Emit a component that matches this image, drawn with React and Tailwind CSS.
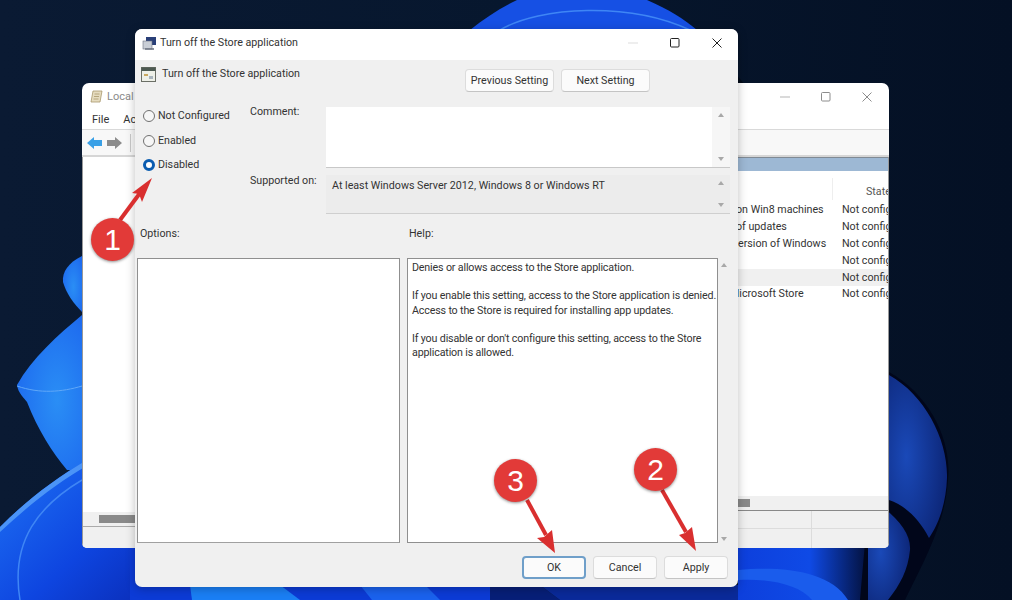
import React from 'react';

// Windows 11 bloom wallpaper, only the bits that show around the windows
function Wallpaper() {
  return (
    <svg className="absolute inset-0 w-full h-full" viewBox="0 0 1012 600">
      <defs>
        <linearGradient id="bg" x1="0" y1="0" x2="1" y2="0">
          <stop offset="0" stopColor="#0a1a33" />
          <stop offset="0.5" stopColor="#07172e" />
          <stop offset="1" stopColor="#041024" />
        </linearGradient>
        <radialGradient id="petal" cx="0.55" cy="0.55" r="0.7">
          <stop offset="0" stopColor="#2a8ef5" />
          <stop offset="1" stopColor="#1c66ee" />
        </radialGradient>
        <linearGradient id="low" x1="0" y1="0" x2="1" y2="1">
          <stop offset="0" stopColor="#1f74f5" />
          <stop offset="0.6" stopColor="#0e45e0" />
          <stop offset="1" stopColor="#0a2db8" />
        </linearGradient>
        <radialGradient id="lobe" cx="0.3" cy="0.5" r="0.8">
          <stop offset="0" stopColor="#1a49b8" />
          <stop offset="1" stopColor="#0b2270" />
        </radialGradient>
        <linearGradient id="under" x1="0" y1="0" x2="1" y2="0">
          <stop offset="0" stopColor="#0d3fdc" />
          <stop offset="0.55" stopColor="#0f4ae6" />
          <stop offset="1" stopColor="#03103a" />
        </linearGradient>
      </defs>
      <rect width="1012" height="600" fill="url(#bg)" />

      {/* top dome */}
      <path d="M470 30 C 485 18 500 8 517 0 L647 0 C 668 9 684 19 697 30 Z" fill="#1650e4" />
      <path d="M500 30 C 540 6 630 2 690 30" fill="none" stroke="#3f86f5" strokeWidth="1.5" />
      <path d="M700 30 L745 85 L730 85 L690 30 Z" fill="#020a18" />

      {/* left petals */}
      <path d="M82 256 C 68 263 62 272 63 282 C 66 293 74 304 82 312 Z" fill="url(#petal)" />
      <path d="M82 315 C 58 335 32 358 17 385 C 18 393 24 398 27 402 C 38 430 52 452 67 470 L90 470 L90 320 Z" fill="url(#petal)" />
      <path d="M17 386 C 40 394 62 392 82 386" fill="none" stroke="#60a8f8" strokeWidth="1" />
      <path d="M0 527 C 25 502 50 482 90 458 L150 458 L150 600 L0 600 Z" fill="url(#low)" />
      <path d="M0 527 C 25 502 50 482 90 458 L90 464 C 55 484 28 506 0 532 Z" fill="#4b94f7" />
      <path d="M82 480 C 40 505 10 540 20 600" fill="none" stroke="#3f86f5" strokeWidth="1.5" />

      {/* strip under the dialog */}
      <rect x="130" y="540" width="360" height="60" fill="#0c3bd6" />
      <path d="M190 585 L280 585 L300 600 L192 600 Z" fill="#1a7ff5" />
      <path d="M360 585 L425 585 L440 600 L372 600 Z" fill="#1a62ee" />
      <path d="M490 585 L540 585 L560 600 L490 600 Z" fill="#071f78" />
      <path d="M540 585 L738 585 L738 600 L560 600 Z" fill="#0a2a9a" />

      {/* below the back window */}
      <rect x="738" y="545" width="130" height="55" fill="url(#under)" />
      <path d="M738 570 C 780 566 830 570 848 600 L812 600 C 800 585 770 578 738 580 Z" fill="#1a5cec" />

      {/* right lobes */}
      <path d="M889 372 C 930 395 952 440 948 480 C 945 520 930 550 905 600 L860 600 L880 372 Z" fill="#01061a" />
      <path d="M889 375 C 925 395 948 440 947 478 C 946 505 938 525 929 538 C 920 520 905 505 889 500 Z" fill="url(#lobe)" />
      <path d="M880 505 C 900 520 911 535 910 550 C 908 570 900 585 888 600 L868 600 L868 545 L880 545 Z" fill="url(#lobe)" />
    </svg>
  );
}

function WinButtons({ faded }) {
  const stroke = faded ? '#8c8c8c' : '#222222';
  return (
    <>
      <svg width="12" height="12" viewBox="0 0 12 12" fill="none">
        <path d="M1 6h10" stroke={faded ? '#b5b5b5' : '#dddddd'} strokeWidth="1" />
      </svg>
      <svg width="12" height="12" viewBox="0 0 12 12" fill="none">
        <rect x="1.5" y="1.5" width="8.5" height="8.5" rx="1" stroke={stroke} strokeWidth="1" />
      </svg>
      <svg width="12" height="12" viewBox="0 0 12 12" fill="none">
        <path d="M1.5 1.5l9 9M10.5 1.5l-9 9" stroke={stroke} strokeWidth="1" />
      </svg>
    </>
  );
}

const policyRows = [
  { name: 'on Win8 machines', pad: 'pl-[7px]' },
  { name: 'of updates', pad: 'pl-[7px]' },
  { name: 'ersion of Windows', pad: 'pl-[9px]' },
  { name: '', pad: 'pl-[7px]' },
  { name: '', pad: 'pl-[7px]', active: true },
  { name: 'Microsoft Store', pad: 'pl-[1px]' },
];

// The Local Group Policy Editor window behind the dialog
function BackWindow() {
  return (
    <div className="absolute left-[82px] top-[83px] w-[807px] h-[465px] bg-white rounded-t-[7px] rounded-b-[5px] overflow-hidden flex flex-col text-[#333]">
      <div className="h-[28px] flex items-center shrink-0">
        <svg className="ml-[7px]" width="15" height="15" viewBox="0 0 15 15">
          <path d="M4 1h9l-2 11H2z" fill="#e6dcc0" stroke="#a8986c" strokeWidth="0.8" />
          <path d="M5.5 4h5M5 6.5h5M4.5 9h5" stroke="#a8986c" strokeWidth="0.8" />
        </svg>
        <span className="ml-[3px] text-[11px] text-[#8a8a8a]">Local</span>
        <div className="ml-auto flex items-center gap-[29px] pr-[16px]">
          <WinButtons faded />
        </div>
      </div>
      <div className="h-[19px] flex items-center pl-[10px] gap-[14px] text-[11px] border-b border-[#d9d9d9] shrink-0">
        <span>File</span>
        <span>Action</span>
      </div>
      <div className="h-[27px] flex items-center pl-[5px] gap-[5px] bg-[#f8f8f8] border-b-2 border-[#d6d6d6] shrink-0">
        <svg width="15" height="12" viewBox="0 0 15 12">
          <path d="M0 6l7-6v3h8v6H7v3z" fill="#3aa0e6" />
        </svg>
        <svg width="15" height="12" viewBox="0 0 15 12">
          <path d="M15 6L8 0v3H0v6h8v3z" fill="#8c8c8c" />
        </svg>
        <div className="ml-[3px] w-px h-[18px] bg-[#c8c8c8]" />
      </div>
      <div className="flex-1 flex min-h-0">
        <div className="flex-1 flex flex-col border-l border-[#999]">
          <div className="flex-1 bg-white" />
          <div className="h-[15px] bg-[#f0f0f0] pl-[16px] flex items-center border-b border-[#aaa]">
            <div className="w-[60px] h-[8px] bg-[#8a8a8a]" />
          </div>
          <div className="h-[21px] bg-[#f0f0f0]" />
        </div>
        <div className="w-[160px] flex flex-col border-r border-[#999]">
          <div className="h-[14px] bg-[#9db8d4] border-t border-[#808a94] shrink-0" />
          <div className="flex-1 flex flex-col">
            <div className="h-[29px] flex justify-end items-end">
              <span className="w-[56px] pl-[33px] text-[#555] border-l border-[#eee] h-[22px] flex items-end overflow-hidden">State</span>
            </div>
            <div className="h-[2px]" />
            {policyRows.map((row, i) => (
              <div key={i} className={`h-[16.8px] flex items-center overflow-hidden whitespace-nowrap ${row.active ? 'bg-[#f0f0f0]' : ''}`}>
                <span className={`w-[113px] shrink-0 ${row.pad}`}>{row.name}</span>
                <span>Not configured</span>
              </div>
            ))}
            <div className="flex-1" />
          </div>
          <div className="h-[15px] bg-[#f0f0f0] pl-[9px] flex items-center border-b border-[#888] shrink-0">
            <div className="w-[12px] h-[8px] bg-[#8a8a8a]" />
          </div>
          <div className="h-[18px] bg-[#f0f0f0] border-b border-[#dcdcdc] flex justify-end shrink-0">
            <div className="w-[77px] border-l border-[#dcdcdc]" />
          </div>
          <div className="h-[19px] bg-[#f0f0f0] flex justify-end shrink-0">
            <div className="w-[77px] border-l border-[#dcdcdc]" />
          </div>
        </div>
      </div>
    </div>
  );
}

function Radio({ label, checked }) {
  return (
    <div className="flex items-center gap-[3px] h-[24.5px]">
      {checked ? (
        <span className="w-[12px] h-[12px] rounded-full border-[3.5px] border-[#0a5cb0] bg-white shrink-0" />
      ) : (
        <span className="w-[12px] h-[12px] rounded-full border border-[#707070] bg-[#f6f6f6] shrink-0" />
      )}
      <span>{label}</span>
    </div>
  );
}

function ScrollArrows({ className }) {
  return (
    <div className={`w-[18px] flex flex-col justify-between items-center py-[6px] ${className}`}>
      <span className="w-0 h-0 border-x-[3px] border-x-transparent border-b-[4px] border-b-[#a8a8a8]" />
      <span className="w-0 h-0 border-x-[3px] border-x-transparent border-t-[4px] border-t-[#a8a8a8]" />
    </div>
  );
}

function DialogButton({ children, className, primary }) {
  return (
    <button className={`h-[23px] pt-px rounded-[4px] bg-[#fbfbfb] border text-[#333] ${primary ? 'border-[#6f9fc9] border-2' : 'border-[#dcdcdc] border-b-[#c4c4c4]'} ${className}`}>
      {children}
    </button>
  );
}

// The policy dialog in front
function PolicyDialog() {
  return (
    <div className="absolute left-[135px] top-[29px] w-[603px] h-[558px] bg-[#f0f0f0] rounded-[7px] overflow-hidden flex flex-col text-[#333] shadow-[0_2px_10px_rgba(0,0,0,0.25)]">
      <div className="h-[31px] bg-white flex items-center pb-[3px] shrink-0">
        <svg className="ml-[7px]" width="15" height="15" viewBox="0 0 15 15">
          <rect x="4" y="1" width="10" height="8" fill="#2a3f78" />
          <rect x="1" y="5" width="9" height="8" fill="#c9ced6" stroke="#6b7280" strokeWidth="0.6" />
          <path d="M3 13h9" stroke="#6b7280" strokeWidth="1.4" />
        </svg>
        <span className="ml-[3px]">Turn off the Store application</span>
        <div className="ml-auto flex items-center gap-[30px] pr-[15px]">
          <WinButtons />
        </div>
      </div>

      <div className="h-[47px] flex items-start pl-[6px] shrink-0">
        <svg className="mt-[7px]" width="15" height="15" viewBox="0 0 15 15">
          <rect x="0.5" y="0.5" width="14" height="14" fill="#eef0e8" stroke="#6b6f66" />
          <rect x="0.5" y="0.5" width="14" height="3.5" fill="#4d5a52" />
          <rect x="3" y="7" width="4" height="2" fill="#c9a860" />
          <rect x="8" y="9" width="4" height="3" fill="#a9b4bd" />
        </svg>
        <span className="ml-[6px] mt-[6px]">Turn off the Store application</span>
        <div className="ml-auto flex gap-[7px] mt-[9px] pr-[88px]">
          <DialogButton className="w-[89px]">Previous Setting</DialogButton>
          <DialogButton className="w-[89px]">Next Setting</DialogButton>
        </div>
      </div>

      <div className="h-[107px] flex pl-[8px] shrink-0">
        <div className="w-[107px] -mt-[3px]">
          <Radio label="Not Configured" />
          <Radio label="Enabled" />
          <Radio label="Disabled" checked />
        </div>
        <div className="flex flex-col gap-[7px]">
          <div className="h-[61px] flex">
            <span className="w-[76px] -mt-[3px]">Comment:</span>
            <div className="w-[404px] flex bg-white border-b border-[#c8c8c8]">
              <div className="flex-1" />
              <ScrollArrows className="bg-[#f6f6f6]" />
            </div>
          </div>
          <div className="h-[39px] flex">
            <span className="w-[76px] -mt-[2px]">Supported on:</span>
            <div className="w-[404px] flex bg-[#ececec] border-b border-[#cfcfcf]">
              <span className="flex-1 pl-[6px] pt-[3px]">At least Windows Server 2012, Windows 8 or Windows RT</span>
              <ScrollArrows />
            </div>
          </div>
        </div>
      </div>

      <div className="h-[44px] flex items-center pl-[5px] shrink-0">
        <span className="w-[269px] mt-[-4px]">Options:</span>
        <span className="mt-[-4px]">Help:</span>
      </div>

      <div className="h-[285px] flex pl-[2px] shrink-0">
        <div className="w-[263px] bg-white border border-[#8f8f8f] border-b-[#a0a0a0]" />
        <div className="w-[311px] ml-[7px] bg-white border border-[#8f8f8f] pl-[4px] pt-[2px] leading-[14.3px] tracking-[-0.16px]">
          <p>Denies or allows access to the Store application.</p>
          <p className="mt-[14px]">If you enable this setting, access to the Store application is denied. Access to the Store is required for installing app updates.</p>
          <p className="mt-[14px]">If you disable or don't configure this setting, access to the Store application is allowed.</p>
        </div>
        <ScrollArrows className="!w-[12px] !py-[5px] !pb-[2px]" />
      </div>

      <div className="flex-1 flex justify-end gap-[7px] pt-[13px] pr-[10px]">
        <DialogButton className="w-[64px]" primary>OK</DialogButton>
        <DialogButton className="w-[64px]">Cancel</DialogButton>
        <DialogButton className="w-[64px]">Apply</DialogButton>
      </div>
    </div>
  );
}

function Arrow({ points, from, to }) {
  return (
    <g>
      <line x1={from[0]} y1={from[1]} x2={to[0]} y2={to[1]} stroke="#d92f2f" strokeWidth="4" />
      <polygon points={points} fill="#d92f2f" />
    </g>
  );
}

function Badge({ className, children }) {
  return (
    <div className={`absolute w-[43px] h-[43px] rounded-full bg-[#e23a38] text-white flex items-center justify-center text-[30px] font-['Liberation_Sans',sans-serif] shadow-[0_1px_3px_rgba(0,0,0,0.45)] ${className}`}>
      {children}
    </div>
  );
}

export default function App() {
  return (
    <div className="relative w-[1012px] h-[600px] overflow-hidden text-[10.7px] font-['Roboto',sans-serif]">
      <Wallpaper />
      <BackWindow />
      <PolicyDialog />

      {/* Red step markers on top of the dialog */}
      <svg className="absolute inset-0 w-full h-full pointer-events-none" viewBox="0 0 1012 600">
        <Arrow from={[120, 220]} to={[140, 193]} points="152,178 132,193 139,194 142,202" />
        <Arrow from={[527, 500]} to={[546, 535]} points="555,553 537,538 544,537 552,530" />
        <Arrow from={[662, 490]} to={[686, 532]} points="696,551 679,535 685,533 692,527" />
      </svg>
      <Badge className="left-[91px] top-[218px]">1</Badge>
      <Badge className="left-[634px] top-[448px]">2</Badge>
      <Badge className="left-[494px] top-[459px]">3</Badge>
    </div>
  );
}
